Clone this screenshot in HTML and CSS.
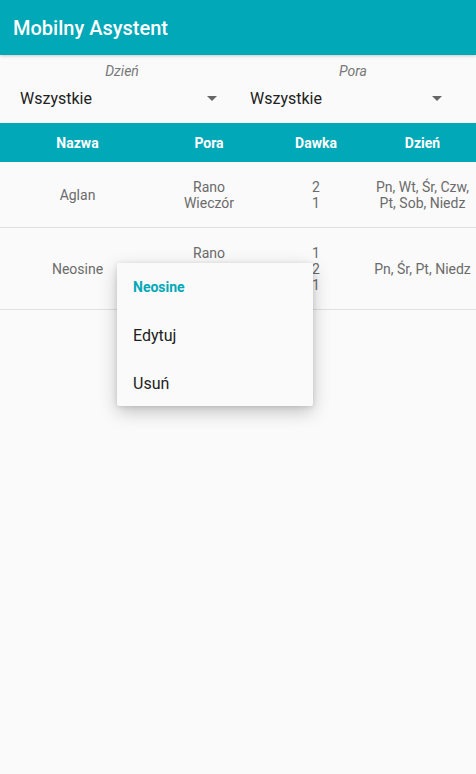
FILE: index.html
```html
<!DOCTYPE html>
<html lang="pl">
<head>
<meta charset="utf-8">
<title>Mobilny Asystent</title>
<link rel="stylesheet" href="styles.css">
</head>
<body>
<div class="app">
  <header class="appbar">Mobilny Asystent</header>
  <section class="filters">
    <div class="filter">
      <div class="flabel">Dzień</div>
      <div class="spinner"><span>Wszystkie</span><span class="arrow"></span></div>
    </div>
    <div class="filter">
      <div class="flabel">Pora</div>
      <div class="spinner"><span>Wszystkie</span><span class="arrow"></span></div>
    </div>
  </section>
  <div class="thead">
    <div>Nazwa</div><div>Pora</div><div>Dawka</div><div>Dzień</div>
  </div>
  <div class="row r1">
    <div>Aglan</div>
    <div>Rano<br>Wieczór</div>
    <div>2<br>1</div>
    <div>Pn, Wt, Śr, Czw,<br>Pt, Sob, Niedz</div>
  </div>
  <div class="row r2">
    <div>Neosine</div>
    <div class="top">Rano</div>
    <div>1<br>2<br>1</div>
    <div>Pn, Śr, Pt, Niedz</div>
    <div class="menu">
      <div class="mtitle">Neosine</div>
      <div class="mitem">Edytuj</div>
      <div class="mitem">Usuń</div>
    </div>
  </div>
</div>
</body>
</html>
```
FILE: styles.css
```css
* { box-sizing: border-box; }
html, body { margin: 0; padding: 0; }
body {
  width: 476px;
  height: 774px;
  background: #fafafa;
  font-family: Roboto, "Noto Sans", sans-serif;
  overflow: hidden;
}
.appbar {
  height: 55px;
  background: #00a8b8;
  color: #fff;
  font-size: 20px;
  font-weight: 500;
  padding-left: 13px;
  display: flex;
  align-items: center;
  box-shadow: 0 1px 3px rgba(0,0,0,0.2);
  position: relative;
  z-index: 1;
}
.filters {
  display: grid;
  grid-template-columns: 230px 246px;
  height: 68px;
  padding-top: 6px;
}
.filter { display: flex; flex-direction: column; }
.flabel {
  text-align: center;
  font-style: italic;
  color: #777;
  font-size: 14px;
  height: 20px;
  line-height: 20px;
}
.filter:first-child .flabel { padding-left: 14px; }
.spinner {
  display: flex;
  align-items: center;
  justify-content: space-between;
  height: 34px;
  padding-left: 20px;
  padding-right: 7px;
  font-size: 16px;
  color: #212121;
}
.filter:nth-child(2) .spinner { padding-left: 20px; padding-right: 28px; }
.arrow {
  width: 0; height: 0;
  border-left: 5px solid transparent;
  border-right: 5px solid transparent;
  border-top: 5px solid #666;
  margin-right: 6px;
}
.thead, .row {
  display: grid;
  grid-template-columns: 155px 108px 106px 107px;
  text-align: center;
}
.thead {
  height: 39px;
  background: #00a8b8;
  color: #fff;
  font-weight: 700;
  font-size: 14px;
  align-items: center;
}
.row {
  color: #6b6b6b;
  font-size: 14px;
  line-height: 16px;
  align-items: center;
  border-bottom: 1px solid #e0e0e0;
  position: relative;
}
.r1 { height: 66px; }
.r2 { height: 82px; }
.r2 .top { align-self: start; padding-top: 17px; }
.menu {
  position: absolute;
  left: 117px;
  top: 35px;
  width: 196px;
  height: 143px;
  background: #fafafa;
  box-shadow: 0 6px 18px rgba(0,0,0,0.22), 0 1px 5px rgba(0,0,0,0.12);
  text-align: left;
  padding-left: 16px;
  border-radius: 2px;
}
.mtitle {
  color: #00a8b8;
  font-weight: 700;
  font-size: 14px;
  height: 48px;
  line-height: 48px;
}
.mitem {
  color: #212121;
  font-size: 16px;
  height: 48px;
  line-height: 48px;
  padding-top: 1px;
}
```
